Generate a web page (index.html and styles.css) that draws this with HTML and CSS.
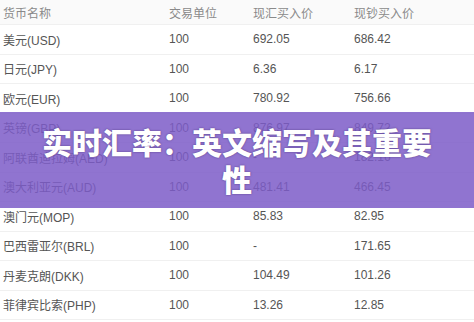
FILE: index.html
```html
<!DOCTYPE html>
<html lang="zh">
<head>
<meta charset="utf-8">
<link rel="stylesheet" href="styles.css">
</head>
<body>
<div class="page">
  <div class="table">
    <div class="row head"><span class="c1">货币名称</span><span class="c2">交易单位</span><span class="c3">现汇买入价</span><span class="c4">现钞买入价</span></div>
    <div class="row"><span class="c1">美元(USD)</span><span class="c2">100</span><span class="c3">692.05</span><span class="c4">686.42</span></div>
    <div class="row"><span class="c1">日元(JPY)</span><span class="c2">100</span><span class="c3">6.36</span><span class="c4">6.17</span></div>
    <div class="row"><span class="c1">欧元(EUR)</span><span class="c2">100</span><span class="c3">780.92</span><span class="c4">756.66</span></div>
    <div class="row"><span class="c1">英镑(GBP)</span><span class="c2">100</span><span class="c3">876.97</span><span class="c4">849.72</span></div>
    <div class="row"><span class="c1">阿联酋迪拉姆(AED)</span><span class="c2">100</span><span class="c3">-</span><span class="c4">182.16</span></div>
    <div class="row"><span class="c1">澳大利亚元(AUD)</span><span class="c2">100</span><span class="c3">481.41</span><span class="c4">466.45</span></div>
    <div class="row"><span class="c1">澳门元(MOP)</span><span class="c2">100</span><span class="c3">85.83</span><span class="c4">82.95</span></div>
    <div class="row"><span class="c1">巴西雷亚尔(BRL)</span><span class="c2">100</span><span class="c3">-</span><span class="c4">171.65</span></div>
    <div class="row"><span class="c1">丹麦克朗(DKK)</span><span class="c2">100</span><span class="c3">104.49</span><span class="c4">101.26</span></div>
    <div class="row"><span class="c1">菲律宾比索(PHP)</span><span class="c2">100</span><span class="c3">13.26</span><span class="c4">12.85</span></div>
  </div>
  <div class="banner"><h1 class="title">实时汇率：英文缩写及其重要性</h1></div>
</div>
</body>
</html>
```

FILE: styles.css
```css
html, body {
  margin: 0;
  padding: 0;
  background: #ffffff;
}
.page {
  position: relative;
  width: 474px;
  height: 322px;
  overflow: hidden;
  font-family: "Liberation Sans", "Noto Sans CJK SC", sans-serif;
}
.table {
  display: flex;
  flex-direction: column;
}
.row {
  display: grid;
  grid-template-columns: 169px 84px 101px 1fr;
  height: 29.5px;
  align-items: center;
  font-size: 12px;
  color: #555;
  border-bottom: 1px solid #f0f0f0;
  box-sizing: border-box;
}
.row.head {
  height: 25px;
  color: #8a8a8a;
  background: #fafafa;
}
.c1 { padding-left: 3px; }
.banner {
  position: absolute;
  left: 0;
  top: 112px;
  width: 474px;
  height: 96px;
  background: rgba(124, 92, 200, 0.85);
  display: flex;
  align-items: center;
  justify-content: center;
  padding: 0 30px;
  box-sizing: border-box;
}
.title {
  margin: 0;
  font-family: "Noto Sans CJK SC", sans-serif;
  font-weight: 900;
  font-size: 30px;
  line-height: 37px;
  color: #fff;
  text-align: center;
  text-shadow: 0 0 2px rgba(40, 20, 80, 0.6);
}
```
